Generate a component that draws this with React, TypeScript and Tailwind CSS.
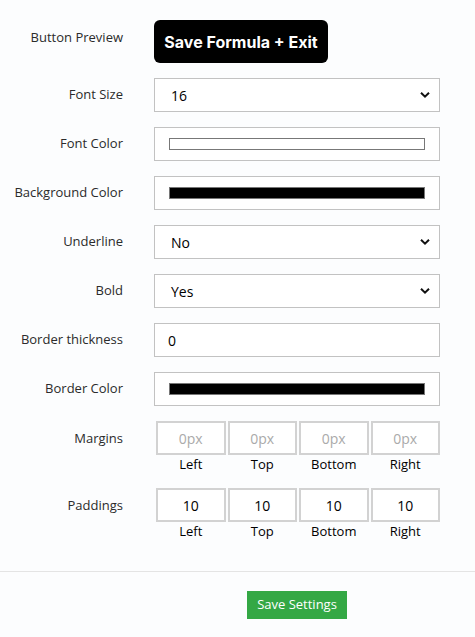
const labelCls = "w-[123px] shrink-0 text-right text-[13px] text-[#2b2b2b]";

function Chevron() {
  return (
    <svg width="10" height="7" viewBox="0 0 10 7" className="pointer-events-none absolute right-[9px] top-1/2 -translate-y-1/2">
      <path d="M1 1.2 L5 5.2 L9 1.2" fill="none" stroke="#111" strokeWidth="2" />
    </svg>
  );
}

function SelectRow({ label, value }: { label: string; value: string }) {
  return (
    <div className="flex items-center gap-[31px]">
      <div className={labelCls}>{label}</div>
      <div className="relative flex h-[34px] w-[286px] items-center border border-[#c2c2c2] bg-white pl-[16px] text-[14px] text-black">
        {value}
        <Chevron />
      </div>
    </div>
  );
}

function ColorRow({ label, color }: { label: string; color: string }) {
  return (
    <div className="flex items-center gap-[31px]">
      <div className={labelCls}>{label}</div>
      <div className="flex h-[34px] w-[286px] items-center border border-[#c2c2c2] bg-white pl-[14px]">
        <div className={`h-[12px] w-[256px] border border-[#777] ${color}`} />
      </div>
    </div>
  );
}

function BoxRow({ label, values, muted }: { label: string; values: string[]; muted?: boolean }) {
  const sides = ["Left", "Top", "Bottom", "Right"];
  return (
    <div className="flex items-start gap-[33px]">
      <div className={`${labelCls} pt-[8px]`}>{label}</div>
      <div className="grid w-[284px] grid-cols-4 gap-x-[2px]">
        {sides.map((s, i) => (
          <div key={s} className="flex flex-col items-center">
            <div
              className={`flex h-[34px] w-full items-center justify-center border-2 border-[#d2d2d2] bg-white text-[14px] ${
                muted ? "text-[#aaa]" : "text-black"
              }`}
            >
              {values[i]}
            </div>
            <div className="h-[18px] text-[13px] leading-[18px] text-black">{s}</div>
          </div>
        ))}
      </div>
    </div>
  );
}

export default function App() {
  return (
    <div className="min-h-screen bg-[#fcfdfe] font-['Open_Sans',sans-serif]">
      <div className="flex flex-col gap-[15px] pt-[20px]">
        <div className="flex items-start gap-[31px]">
          <div className={`${labelCls} pt-[8px]`}>Button Preview</div>
          <button className="h-[43px] w-[174px] rounded-[6px] bg-black font-['Inter',sans-serif] text-[16px] font-bold text-white">
            Save Formula + Exit
          </button>
        </div>
        <SelectRow label="Font Size" value="16" />
        <ColorRow label="Font Color" color="bg-white" />
        <ColorRow label="Background Color" color="bg-black" />
        <SelectRow label="Underline" value="No" />
        <SelectRow label="Bold" value="Yes" />
        <div className="flex items-center gap-[31px]">
          <div className={labelCls}>Border thickness</div>
          <div className="flex h-[34px] w-[286px] items-center border border-[#c2c2c2] bg-white pl-[13px] text-[14px] text-black">
            0
          </div>
        </div>
        <ColorRow label="Border Color" color="bg-black" />
        <BoxRow label="Margins" values={["0px", "0px", "0px", "0px"]} muted />
        <BoxRow label="Paddings" values={["10", "10", "10", "10"]} />
      </div>
      <div className="mt-[31px] border-t border-[#e4e4e4] pt-[19px] pl-[247px]">
        <button className="h-[28px] w-[100px] bg-[#34a845] text-[13px] text-white">Save Settings</button>
      </div>
    </div>
  );
}
